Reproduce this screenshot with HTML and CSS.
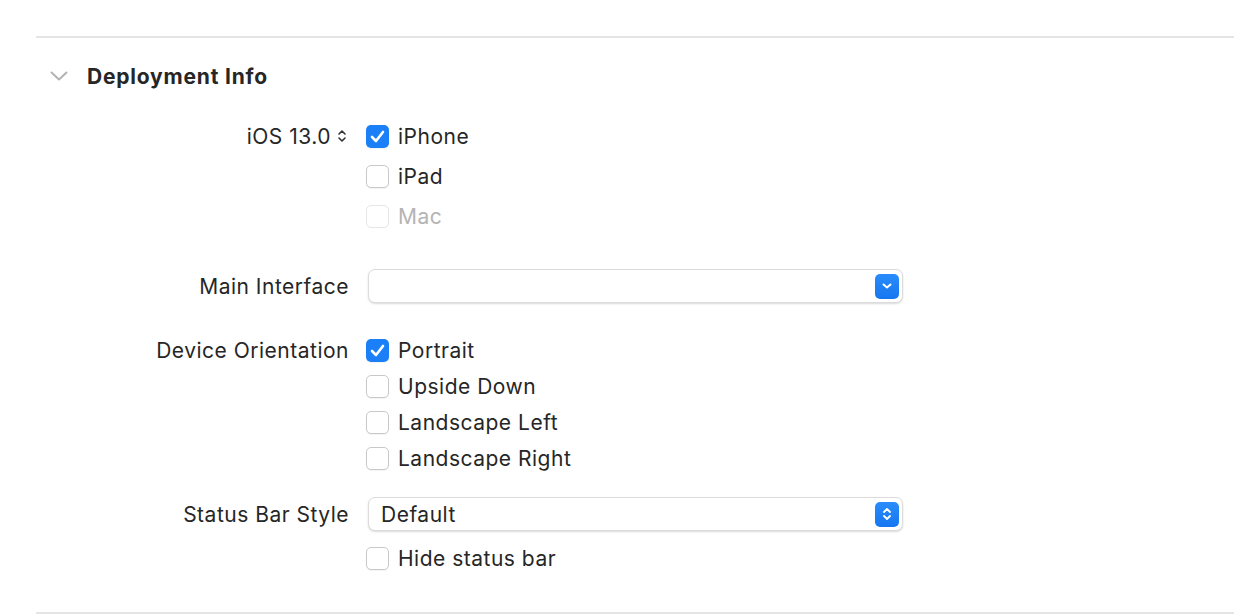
FILE: index.html
```html
<!DOCTYPE html>
<html lang="en">

<head>
  <meta charset="UTF-8">
  <title>Deployment Info</title>
  <link rel="stylesheet" href="styles.css">
</head>

<body>
  <section class="panel">
    <div class="panel-header">
      <span class="disclosure">
        <svg xmlns="http://www.w3.org/2000/svg" width="18" height="10" viewBox="0 0 18 10" fill="none">
          <path d="M1.5 1.5L9 8.5L16.5 1.5" stroke="#B3B3B3" stroke-width="2" stroke-linecap="round" stroke-linejoin="round" />
        </svg>
      </span>
      <span class="title">Deployment Info</span>
    </div>

    <div class="form">
      <div class="field field-target">
        <div class="label">
          iOS 13.0
          <svg class="stepper" xmlns="http://www.w3.org/2000/svg" width="10" height="14" viewBox="0 0 10 14" fill="none">
            <path d="M2 5L5 2L8 5M2 9L5 12L8 9" stroke="#333" stroke-width="1.6" stroke-linecap="round" stroke-linejoin="round" />
          </svg>
        </div>
        <div class="options">
          <label class="option"><span class="check checked"></span>iPhone</label>
          <label class="option"><span class="check"></span>iPad</label>
          <label class="option disabled"><span class="check"></span>Mac</label>
        </div>
      </div>

      <div class="field field-interface">
        <div class="label">Main Interface</div>
        <div class="options">
          <div class="popup">
            <span class="popup-text"></span>
            <span class="popup-button">
              <svg xmlns="http://www.w3.org/2000/svg" width="12" height="8" viewBox="0 0 12 8" fill="none">
                <path d="M2.5 2.5L6 5.5L9.5 2.5" stroke="#FFF" stroke-width="2" stroke-linecap="round" stroke-linejoin="round" />
              </svg>
            </span>
          </div>
        </div>
      </div>

      <div class="field field-orientation">
        <div class="label">Device Orientation</div>
        <div class="options">
          <label class="option"><span class="check checked"></span>Portrait</label>
          <label class="option"><span class="check"></span>Upside Down</label>
          <label class="option"><span class="check"></span>Landscape Left</label>
          <label class="option"><span class="check"></span>Landscape Right</label>
        </div>
      </div>

      <div class="field field-status">
        <div class="label">Status Bar Style</div>
        <div class="options">
          <div class="popup">
            <span class="popup-text">Default</span>
            <span class="popup-button">
              <svg xmlns="http://www.w3.org/2000/svg" width="12" height="18" viewBox="0 0 12 18" fill="none">
                <path d="M3 7L6 4L9 7M3 11L6 14L9 11" stroke="#FFF" stroke-width="1.8" stroke-linecap="round" stroke-linejoin="round" />
              </svg>
            </span>
          </div>
          <label class="option hide-status"><span class="check"></span>Hide status bar</label>
        </div>
      </div>
    </div>
  </section>
</body>

</html>
```

FILE: styles.css
```css
body {
  margin: 0;
  background: #fff;
  font-family: Inter, "Noto Sans", sans-serif;
  color: #262626;
}

.panel {
  margin: 36px 16px 0 36px;
  border-top: 2px solid #e4e4e4;
  border-bottom: 2px solid #e4e4e4;
  padding-bottom: 36px;
}

.panel-header {
  display: flex;
  align-items: center;
  height: 76px;
}

.disclosure {
  display: flex;
  margin-left: 14px;
  width: 37px;
}

.title {
  font-size: 21px;
  font-weight: 700;
  letter-spacing: 0.8px;
  color: #262626;
}

.form {
  display: flex;
  flex-direction: column;
  margin-top: 2px;
}

.field {
  display: grid;
  grid-template-columns: 313px 1fr;
  column-gap: 17px;
  align-items: start;
}

.label {
  display: flex;
  align-items: center;
  justify-content: flex-end;
  gap: 6px;
  height: 40px;
  font-size: 21px;
  letter-spacing: 0.5px;
  white-space: nowrap;
}

.stepper {
  margin-right: 2px;
}

.options {
  display: flex;
  flex-direction: column;
}

.option {
  display: flex;
  align-items: center;
  gap: 9px;
  height: 40px;
  font-size: 21px;
  letter-spacing: 0.5px;
  color: #262626;
}

.option.disabled {
  color: #b4b4b4;
}

.check {
  box-sizing: border-box;
  width: 23px;
  height: 23px;
  border: 1px solid #c9c9c9;
  border-radius: 5px;
  background: #fff;
  box-shadow: 0 1px 1px rgba(0, 0, 0, 0.05);
}

.option.disabled .check {
  border-color: #e6e6e6;
  box-shadow: none;
}

.check.checked {
  border: none;
  background: #1b7ff7 url("data:image/svg+xml,%3Csvg xmlns='http://www.w3.org/2000/svg' width='23' height='23' viewBox='0 0 23 23'%3E%3Cpath d='M6 12L10 16L17 7' fill='none' stroke='white' stroke-width='2.6' stroke-linecap='round' stroke-linejoin='round'/%3E%3C/svg%3E") center / 23px 23px no-repeat;
}

.field-interface {
  margin-top: 33px;
}

.field-interface .label {
  height: 34px;
}

.field-orientation {
  margin-top: 29px;
}

.field-orientation .label,
.field-orientation .option,
.field-status .option {
  height: 36px;
}

.field-status {
  margin-top: 21px;
}

.field-status .label {
  height: 34px;
}

.popup {
  box-sizing: border-box;
  display: flex;
  align-items: center;
  justify-content: space-between;
  width: 535px;
  height: 34px;
  margin-left: 2px;
  padding: 0 3px 0 12px;
  background: #fff;
  border: 1px solid #dcdcdc;
  border-radius: 7px;
  box-shadow: 0 1px 2px rgba(0, 0, 0, 0.15);
  font-size: 21px;
  letter-spacing: 0.5px;
}

.popup-button {
  display: flex;
  align-items: center;
  justify-content: center;
  width: 24px;
  height: 25px;
  border-radius: 5px;
  background: linear-gradient(#2a8cfb, #1676f0);
}

.hide-status {
  margin-top: 9px;
}
```
